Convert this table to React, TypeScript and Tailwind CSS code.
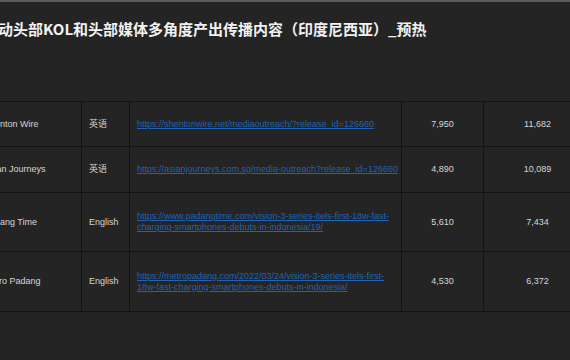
const rows = [
  {
    name: "Shenton Wire",
    lang: "英语",
    url: "https://shentonwire.net/mediaoutreach/?release_id=126660",
    a: "7,950",
    b: "11,682",
    h: "h-[45px]",
  },
  {
    name: "Asian Journeys",
    lang: "英语",
    url: "https://asianjourneys.com.sg/media-outreach?release_id=126660",
    a: "4,890",
    b: "10,089",
    h: "h-[46px]",
  },
  {
    name: "Padang Time",
    lang: "English",
    url: "https://www.padangtime.com/vision-3-series-itels-first-18w-fast-charging-smartphones-debuts-in-indonesia/19/",
    a: "5,610",
    b: "7,434",
    h: "h-[59px]",
  },
  {
    name: "Metro Padang",
    lang: "English",
    url: "https://metropadang.com/2022/03/24/vision-3-series-itels-first-18w-fast-charging-smartphones-debuts-in-indonesia/",
    a: "4,530",
    b: "6,372",
    h: "h-[60px]",
  },
];

export default function App() {
  return (
    <div className="w-[570px] h-[360px] overflow-hidden bg-[#242424] border-t-2 border-[#5c5c5c]">
      <h1
        className="ml-[-2px] mt-[16px] text-[15px] leading-[22px] font-bold text-[#f2f2f2] whitespace-nowrap"
        style={{ fontFamily: '"Noto Sans CJK SC", "Noto Sans", sans-serif' }}
      >
        动头部KOL和头部媒体多角度产出传播内容（印度尼西亚）_预热
      </h1>

      <table
        className="mt-[61px] ml-[-30px] table-fixed border-collapse text-[9px] leading-[11px] text-[#d6d6d6] w-[621px]"
        style={{ fontFamily: '"Liberation Sans", Arial, sans-serif' }}
      >
        <colgroup>
          <col className="w-[111px]" />
          <col className="w-[48px]" />
          <col className="w-[272px]" />
          <col className="w-[82px]" />
          <col className="w-[108px]" />
        </colgroup>
        <tbody>
          {rows.map((r) => (
            <tr key={r.name} className={r.h}>
              <td className="border border-[#141414] pl-[13px] whitespace-nowrap">{r.name}</td>
              <td
                className="border border-[#141414] pl-[7px]"
                style={{ fontFamily: '"Liberation Sans", "Noto Sans CJK SC", sans-serif' }}
              >
                {r.lang}
              </td>
              <td className="border border-[#141414] pl-[7px] pr-[2px]">
                <a href="#" className="text-[#2163b4] underline break-words">
                  {r.url}
                </a>
              </td>
              <td className="border border-[#141414] text-center">{r.a}</td>
              <td className="border border-[#141414] text-center">{r.b}</td>
            </tr>
          ))}
        </tbody>
      </table>
    </div>
  );
}
